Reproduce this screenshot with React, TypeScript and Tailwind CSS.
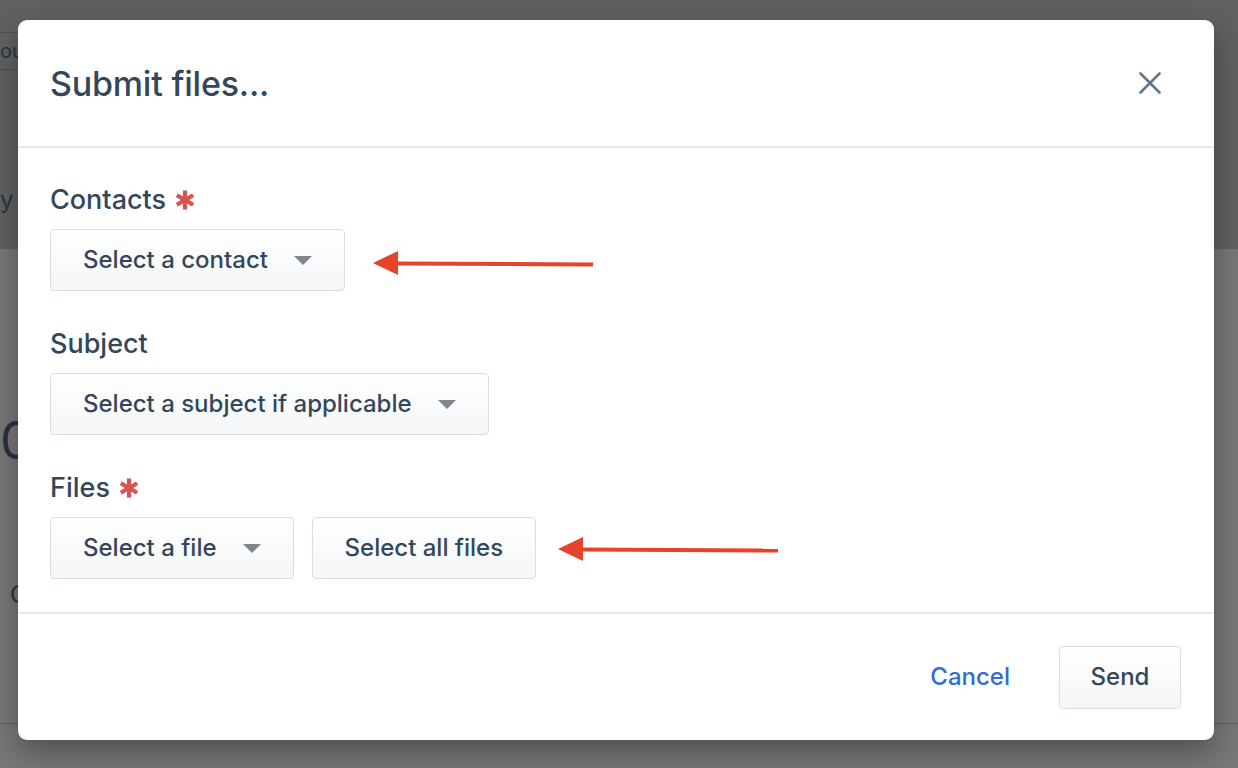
const font = { fontFamily: '"Inter", "Liberation Sans", sans-serif' };

function Caret() {
  return (
    <svg width="18" height="9" viewBox="0 0 18 9" className="ml-[26px] shrink-0">
      <path d="M0 0 L18 0 L9 9 Z" fill="#7f868d" />
    </svg>
  );
}

function Required() {
  return (
    <svg width="20" height="20" viewBox="0 0 20 20" className="ml-[9px]">
      <g stroke="#d9534f" strokeWidth="4.2" strokeLinecap="butt">
        <line x1="10" y1="0.5" x2="10" y2="19.5" />
        <line x1="1.8" y1="5.3" x2="18.2" y2="14.7" />
        <line x1="1.8" y1="14.7" x2="18.2" y2="5.3" />
      </g>
    </svg>
  );
}

function CloseIcon() {
  return (
    <svg width="22" height="22" viewBox="0 0 22 22">
      <g stroke="#62778b" strokeWidth="2.6" strokeLinecap="round">
        <line x1="1.5" y1="1.5" x2="20.5" y2="20.5" />
        <line x1="20.5" y1="1.5" x2="1.5" y2="20.5" />
      </g>
    </svg>
  );
}

function SelectButton({ label, caret = true }: { label: string; caret?: boolean }) {
  return (
    <button className="flex h-[62px] items-center rounded-[4px] border border-[#d8dee6] bg-gradient-to-b from-white to-[#f4f6f8] px-8 text-[24px] font-medium text-[#33475b]">
      {label}
      {caret && <Caret />}
    </button>
  );
}

function Field({ label, required, children }: { label: string; required?: boolean; children: React.ReactNode }) {
  return (
    <div className="flex flex-col">
      <div className="flex h-8 items-center text-[27px] font-medium text-[#33475b]">
        {label}
        {required && <Required />}
      </div>
      <div className="mt-[13px] flex gap-[18px]">{children}</div>
    </div>
  );
}

export default function App() {
  return (
    <div className="relative h-[768px] w-[1238px] overflow-hidden bg-[#777877]" style={font}>
      {/* dimmed page behind */}
      <div className="h-[249px] bg-[#606162] pt-[32px]">
        <div className="flex h-[38px] w-[60px] items-center border-y border-[#4d4e50] text-[20px] text-[#2a3440]">
          ou
        </div>
        <div className="mt-[112px] text-[24px] text-[#2a3440]">y</div>
      </div>
      <div className="pt-[166px] text-[52px] leading-none text-[#2a3440]">0</div>
      <div className="mt-[110px] pl-[10px] text-[24px] text-[#2a3440]">C</div>
      <div className="mt-[110px] border-t border-[#5d5e5e]" />

      {/* modal */}
      <div className="absolute left-[18px] top-[20px] flex h-[720px] w-[1196px] flex-col rounded-[9px] bg-white shadow-[0_12px_32px_rgba(0,0,0,0.35)]">
        <div className="flex h-[128px] shrink-0 items-center justify-between border-b-2 border-[#e5e8ec] pl-8 pr-[53px]">
          <h1 className="text-[34px] font-medium tracking-[-0.2px] text-[#33475b]">Submit files...</h1>
          <CloseIcon />
        </div>
        <div className="flex flex-1 flex-col gap-[37px] px-8 pt-[36px]">
          <Field label="Contacts" required>
            <SelectButton label="Select a contact" />
          </Field>
          <Field label="Subject">
            <SelectButton label="Select a subject if applicable" />
          </Field>
          <Field label="Files" required>
            <SelectButton label="Select a file" />
            <SelectButton label="Select all files" caret={false} />
          </Field>
        </div>
        <div className="flex h-[128px] shrink-0 items-center justify-end border-t-2 border-[#e5e8ec] pr-[33px]">
          <button className="mr-[49px] text-[24px] font-medium text-[#2e6fcf]">Cancel</button>
          <button className="h-[63px] w-[122px] rounded-[4px] border border-[#d8dee6] bg-gradient-to-b from-white to-[#f4f6f8] text-[24px] font-medium text-[#33475b]">
            Send
          </button>
        </div>
      </div>

      {/* annotation arrows */}
      <svg className="pointer-events-none absolute left-0 top-0" width="1238" height="768">
        <g fill="#e5432b" stroke="#e5432b">
          <line x1="396" y1="263.5" x2="593" y2="264.5" strokeWidth="4" />
          <path d="M373 263 L398 251 L398 275 Z" stroke="none" />
          <line x1="581" y1="549.5" x2="778" y2="550.5" strokeWidth="4" />
          <path d="M558 549 L583 537 L583 561 Z" stroke="none" />
        </g>
      </svg>
    </div>
  );
}
